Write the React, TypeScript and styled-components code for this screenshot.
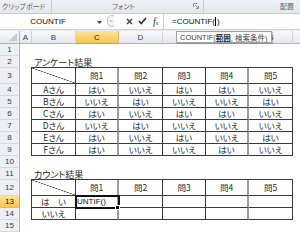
import React from 'react';
import styled, { createGlobalStyle, css } from 'styled-components';

const GlobalStyle = createGlobalStyle`
  html, body { margin: 0; padding: 0; }
  body {
    width: 300px;
    height: 232px;
    overflow: hidden;
    background: #fff;
    font-family: "Liberation Sans", "Noto Sans CJK JP", sans-serif;
  }
`;

// H is only partly on screen, its letter falls outside the window
const COLS = ['A', 'B', 'C', 'D', 'E', 'F', 'G', ''];
const ROW_HEIGHTS = [12, 12, 16, 12, 12, 12, 12, 12, 12, 12, 12, 16, 12, 12, 12];
const QUESTIONS = ['問1', '問2', '問3', '問4', '問5'];

const survey = [
  ['Aさん', 'はい', 'いいえ', 'はい', 'はい', 'いいえ'],
  ['Bさん', 'いいえ', 'はい', 'いいえ', 'いいえ', 'はい'],
  ['Cさん', 'はい', 'いいえ', 'はい', 'はい', 'いいえ'],
  ['Dさん', 'いいえ', 'はい', 'いいえ', 'いいえ', 'いいえ'],
  ['Eさん', 'はい', 'いいえ', 'はい', 'いいえ', 'はい'],
  ['Fさん', 'はい', 'いいえ', 'いいえ', 'はい', 'いいえ'],
];

const counts = [
  ['は　い', 'UNTIF()', '', '', '', ''],
  ['いいえ', '', '', '', '', ''],
];

const Launcher = () => (
  <svg width="6" height="6" viewBox="0 0 6 6">
    <path d="M0.5 4V0.5H4" fill="none" stroke="#8d939b" />
    <path d="M2 2L5.3 5.3M5.5 3v2.5H3" fill="none" stroke="#8d939b" />
  </svg>
);

type TableProps = { row: number; rows: string[][]; heights: string; activeText?: string };

const SheetTable = ({ row, rows, heights, activeText }: TableProps) => (
  <DataTable $row={row} $span={rows.length + 1} $rows={heights}>
    <TCell $diag />
    {QUESTIONS.map((q, i) => (
      <TCell key={q} $sep={i === 0 || i === 3}>
        {q}
      </TCell>
    ))}
    {rows.map((r) =>
      r.map((v, i) => (
        <TCell key={r[0] + i} $sep={i === 1 || i === 4} $active={!!activeText && v === activeText}>
          {v}
        </TCell>
      ))
    )}
  </DataTable>
);

const App = () => {
  return (
    <>
      <GlobalStyle />
      <Window>
        <Ribbon>
          <RibbonGroup $width={52} $pad={2} $launchRight={7}>
            <GroupLabel>クリップボード</GroupLabel>
            <Launcher />
          </RibbonGroup>
          <RibbonGroup $width={152} $pad={60} $launchRight={4}>
            <GroupLabel>フォント</GroupLabel>
            <Launcher />
          </RibbonGroup>
          <RibbonGroup $pad={76}>
            <GroupLabel>配置</GroupLabel>
          </RibbonGroup>
        </Ribbon>

        <FormulaBar>
          <NameBox>
            COUNTIF
            <DropArrow width="5" height="3" viewBox="0 0 5 3">
              <path d="M0 0h5L2.5 3z" fill="#444" />
            </DropArrow>
          </NameBox>
          <Controls>
            <svg width="7" height="12" viewBox="0 0 7 12">
              <rect x="0.5" y="0.5" width="9" height="11" rx="4.5" fill="#f4f5f7" stroke="#b9c0c9" />
              <path d="M2.5 6h3" stroke="#9aa2ac" />
            </svg>
            <svg width="7" height="7" viewBox="0 0 7 7" style={{ marginLeft: 12 }}>
              <path d="M1 1l5 5M6 1L1 6" stroke="#4a4a4a" strokeWidth="1.6" />
            </svg>
            <svg width="9" height="8" viewBox="0 0 9 8" style={{ marginLeft: 5 }}>
              <path d="M1 4.2l2.3 2.4L8 1" fill="none" stroke="#333" strokeWidth="1.7" />
            </svg>
            <FxLabel>
              f<small>x</small>
            </FxLabel>
          </Controls>
          <FormulaInput>
            =COUNTIF(<Caret />)
          </FormulaInput>
        </FormulaBar>
        <BarGap />

        <Sheet>
          <Corner>
            <svg width="8" height="8" viewBox="0 0 8 8">
              <path d="M8 0V8H0z" fill="#c3c9d1" />
            </svg>
          </Corner>
          {COLS.map((c, i) => (
            <ColHeader key={i} $col={i + 2} $selected={c === 'C'}>
              {c}
            </ColHeader>
          ))}
          {ROW_HEIGHTS.map((_, i) => (
            <RowHeader key={i} $row={i + 1} $selected={i + 1 === 13}>
              {i + 1}
            </RowHeader>
          ))}

          <Title $row={2}>アンケート結果</Title>
          <SheetTable row={3} rows={survey} heights="16px repeat(6, 12px)" />

          <Title $row={11}>カウント結果</Title>
          <SheetTable row={12} rows={counts} heights="16px repeat(2, 12px)" activeText="UNTIF()" />
        </Sheet>

        <Tooltip>
          COUNTIF(<b>範囲</b>, 検索条件)
        </Tooltip>
      </Window>
    </>
  );
};

export default App;

const Window = styled.div`
  position: relative;
  width: 300px;
  height: 232px;
  overflow: hidden;
  display: flex;
  flex-direction: column;
`;

const Ribbon = styled.div`
  display: flex;
  height: 14px;
  box-sizing: border-box;
  background: linear-gradient(#eef1f5, #e2e7ed);
  border-bottom: 1px solid #c4cbd4;
`;

const RibbonGroup = styled.div<{ $width?: number; $pad: number; $launchRight?: number }>`
  display: flex;
  align-items: center;
  box-sizing: border-box;
  padding-left: ${(p) => p.$pad}px;
  ${(p) =>
    p.$width
      ? css`
          width: ${p.$width}px;
          border-right: 1px solid #c9cfd7;
        `
      : css`
          flex: 1;
        `}
  svg {
    margin-left: auto;
    margin-right: ${(p) => p.$launchRight ?? 0}px;
  }
`;

const GroupLabel = styled.span`
  font-family: "Noto Sans CJK JP", sans-serif;
  font-feature-settings: "palt" 1;
  font-size: 7px;
  color: #5f656d;
  white-space: nowrap;
`;

const FormulaBar = styled.div`
  display: flex;
  height: 16px;
  background: #fff;
`;

const NameBox = styled.div`
  position: relative;
  width: 104px;
  display: flex;
  align-items: center;
  justify-content: center;
  padding-right: 8px;
  box-sizing: border-box;
  font-size: 8px;
  color: #111;
`;

const DropArrow = styled.svg`
  position: absolute;
  right: 2px;
  top: 7px;
`;

const Controls = styled.div`
  width: 59px;
  display: flex;
  align-items: center;
  padding-left: 3px;
  box-sizing: border-box;
`;

const FxLabel = styled.span`
  margin-left: 6px;
  font-family: "Liberation Serif", serif;
  font-style: italic;
  font-size: 10px;
  color: #333;
  small {
    font-size: 6px;
  }
`;

const FormulaInput = styled.div`
  flex: 1;
  display: flex;
  align-items: center;
  padding-left: 8px;
  border-left: 1px solid #c5ccd6;
  font-size: 8px;
  color: #111;
`;

const Caret = styled.span`
  display: inline-block;
  width: 1px;
  height: 9px;
  background: #000;
  margin: 0 0.5px;
`;

const BarGap = styled.div`
  height: 2px;
  background: #e6eaef;
  border-top: 1px solid #cfd5dc;
  box-sizing: border-box;
`;

const Sheet = styled.div`
  display: grid;
  grid-template-columns: 20px 12px 44px 43px 44px 43px 43px 44px 44px;
  grid-template-rows: 13px ${ROW_HEIGHTS.map((h) => `${h}px`).join(' ')};
`;

const headerBase = css`
  display: flex;
  align-items: center;
  justify-content: center;
  box-sizing: border-box;
  font-size: 8px;
  color: #34404f;
`;

const selectedHeader = css`
  background: linear-gradient(#fbe29c, #f5c54f);
  color: #222;
`;

const Corner = styled.div`
  grid-row: 1;
  grid-column: 1;
  display: flex;
  align-items: flex-end;
  justify-content: flex-end;
  padding: 0 2px 2px 0;
  box-sizing: border-box;
  background: linear-gradient(#f8f9fb, #e3e7ec);
  border-right: 1px solid #a9b6c6;
  border-bottom: 1px solid #a9b6c6;
`;

const ColHeader = styled.div<{ $col: number; $selected?: boolean }>`
  ${headerBase};
  grid-row: 1;
  grid-column: ${(p) => p.$col};
  background: linear-gradient(#f8f9fb, #e3e7ec);
  border-right: 1px solid #cfd5dc;
  border-bottom: 1px solid #a9b6c6;
  ${(p) =>
    p.$selected &&
    css`
      ${selectedHeader};
      border-right-color: #e7b75e;
      border-bottom-color: #e39a2e;
    `}
`;

const RowHeader = styled.div<{ $row: number; $selected?: boolean }>`
  ${headerBase};
  grid-column: 1;
  grid-row: ${(p) => p.$row + 1};
  background: #eceff3;
  border-right: 1px solid #a9b6c6;
  border-bottom: 1px solid #d3d9e0;
  ${(p) =>
    p.$selected &&
    css`
      ${selectedHeader};
      border-right-color: #e39a2e;
      border-bottom-color: #e7b75e;
    `}
`;

const Title = styled.div<{ $row: number }>`
  grid-row: ${(p) => p.$row + 1};
  grid-column: 3 / span 3;
  align-self: end;
  padding: 0 0 1px 2px;
  font-family: "Noto Sans CJK JP", sans-serif;
  font-feature-settings: "palt" 1;
  font-size: 9px;
  line-height: 1;
  color: #1e1e1e;
  white-space: nowrap;
`;

const DataTable = styled.div<{ $row: number; $span: number; $rows: string }>`
  grid-column: 3 / 9;
  grid-row: ${(p) => p.$row + 1} / span ${(p) => p.$span};
  display: grid;
  grid-template-columns: 44px 43px 44px 43px 43px 44px;
  grid-template-rows: ${(p) => p.$rows};
  margin: -1px 0 0 -1px;
  border-top: 1px solid #3a3a3a;
  border-left: 1px solid #3a3a3a;
`;

const TCell = styled.div<{ $sep?: boolean; $diag?: boolean; $active?: boolean }>`
  position: relative;
  display: flex;
  align-items: center;
  justify-content: center;
  box-sizing: border-box;
  border-right: ${(p) => (p.$sep ? '2px solid #9c9c9c' : '1px solid #3a3a3a')};
  border-bottom: 1px solid #3a3a3a;
  font-family: "Noto Sans CJK JP", sans-serif;
  font-feature-settings: "palt" 1;
  font-size: 8.5px;
  line-height: 1;
  color: #2a2a2a;
  white-space: nowrap;
  ${(p) =>
    p.$diag &&
    css`
      background: linear-gradient(
        to top right,
        transparent calc(50% - 0.6px),
        #3a3a3a 50%,
        transparent calc(50% + 0.6px)
      );
    `}
  ${(p) =>
    p.$active &&
    css`
      z-index: 1;
      justify-content: flex-start;
      padding-left: 1px;
      font-family: "Liberation Sans", sans-serif;
      font-size: 8px;
      color: #111;
      outline: 2px solid #111;
      outline-offset: -1px;
      &::after {
        content: '';
        position: absolute;
        right: -3px;
        bottom: -3px;
        width: 3px;
        height: 3px;
        background: #111;
        border: 1px solid #fff;
      }
    `}
`;

const Tooltip = styled.div`
  position: absolute;
  left: 176px;
  top: 31px;
  height: 12px;
  box-sizing: border-box;
  display: flex;
  align-items: center;
  padding: 0 3px;
  background: #fff;
  border: 1px solid #a3a3a3;
  box-shadow: 1px 1px 1px rgba(0, 0, 0, 0.18);
  font-size: 7.5px;
  color: #444;
  white-space: nowrap;
  b {
    font-weight: bold;
    color: #222;
  }
`;
